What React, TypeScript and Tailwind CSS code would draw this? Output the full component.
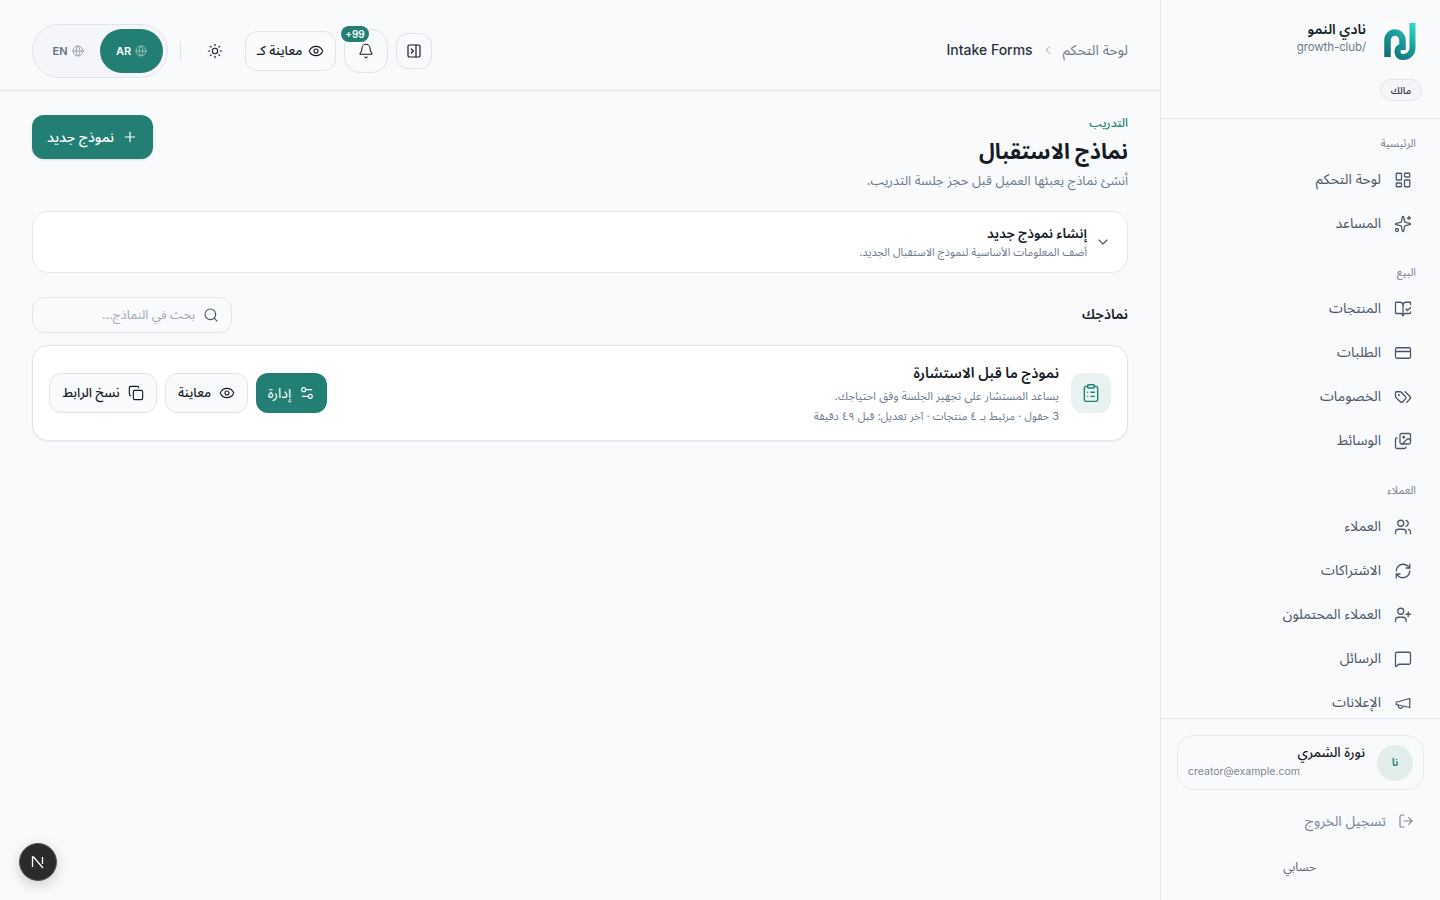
import React from "react";
import { LayoutDashboard, Sparkles, BookOpenCheck, CreditCard, Images, Users, RefreshCw, UserPlus, MessageSquare, LogOut, PanelRightClose, Bell, Eye, Sun, Globe, Plus, ChevronDown, ChevronRight, Search, Settings2, Copy, ClipboardList } from "lucide-react";

const font = "font-['Inter','Noto_Sans_Arabic','IBM_Plex_Sans_Arabic','Noto_Sans','DejaVu_Sans',sans-serif]";

function Megaphone({ className, strokeWidth }: { className?: string; strokeWidth?: number }) {
  return (
    <svg className={className} viewBox="0 0 24 24" fill="none" stroke="currentColor" strokeWidth={strokeWidth} strokeLinecap="round" strokeLinejoin="round">
      <path d="m3 11 18-5v12L3 14v-3z" />
      <path d="M11.6 16.8a3 3 0 1 1-5.8-1.6" />
    </svg>
  );
}

function Tags({ className, strokeWidth }: { className?: string; strokeWidth?: number }) {
  return (
    <svg className={className} viewBox="0 0 24 24" fill="none" stroke="currentColor" strokeWidth={strokeWidth} strokeLinecap="round" strokeLinejoin="round">
      <path d="m15 5 6.3 6.3a2.4 2.4 0 0 1 0 3.4L17 19" />
      <path d="M9.586 5.586A2 2 0 0 0 8.172 5H3a1 1 0 0 0-1 1v5.172a2 2 0 0 0 .586 1.414L8.29 18.29a2.426 2.426 0 0 0 3.42 0l3.58-3.58a2.426 2.426 0 0 0 0-3.42z" />
      <circle cx="6.5" cy="9.5" r=".5" fill="currentColor" />
    </svg>
  );
}

function NavItem({ icon: Icon, label }: { icon: any; label: string }) {
  return (
    <div className="flex h-11 items-center gap-[13px] pr-[26px] pl-3 text-[14px] text-[#4b5768]">
      <Icon className="size-[18px] shrink-0" strokeWidth={1.7} />
      <span className="-mt-[3px]">{label}</span>
    </div>
  );
}

function Section({ title, children, className }: { title: string; children: React.ReactNode; className?: string }) {
  return (
    <div className={className}>
      <div className="h-[18px] pr-[24px] text-[11px] leading-[16px] text-[#7b8594]">{title}</div>
      <div className="mt-[5px] pr-[2px]">{children}</div>
    </div>
  );
}

function Logo() {
  return (
    <div className="flex size-[44px] shrink-0 items-center justify-center rounded-xl bg-[#fbfbfb]">
      <svg width="34" height="38" viewBox="0 0 34 38" fill="none">
        <defs>
          <linearGradient id="lg" x1="4" y1="36" x2="30" y2="2" gradientUnits="userSpaceOnUse">
            <stop stopColor="#0c6a74" />
            <stop offset="0.55" stopColor="#1a9a98" />
            <stop offset="1" stopColor="#2ad8c8" />
          </linearGradient>
        </defs>
        <path d="M4.5 34V17a7.5 7.5 0 0 1 15 0v10" stroke="url(#lg)" strokeWidth="6.5" strokeLinecap="butt" />
        <path d="M29.5 0v25a9 9 0 0 1-9 9h-1a5 5 0 0 1-5-5v-1a4 4 0 0 1 4-4h1" stroke="url(#lg)" strokeWidth="6" strokeLinecap="butt" />
      </svg>
    </div>
  );
}

export default function App() {
  return (
    <div dir="rtl" className={`relative flex h-screen w-full overflow-hidden bg-[#f9fafc] text-[#161c27] ${font}`}>
      <aside className="flex h-full w-[280px] shrink-0 flex-col border-l border-[#e4e7ee]">
        <div className="h-[119px] shrink-0 border-b border-[#e4e7ee] pr-[18px] pt-[20px]">
          <div className="flex items-start gap-[12px]">
            <Logo />
            <div className="-mt-[1px]">
              <div className="text-[14px] font-semibold leading-[20px] text-[#161c27]">نادي النمو</div>
              <div dir="ltr" className="mt-[1px] text-right text-[11.5px] leading-[15px] tracking-[-0.1px] text-[#6f7a8a]">growth-club/</div>
            </div>
          </div>
          <div className="mt-[15px] flex">
            <span className="flex h-[22px] w-[42px] items-center justify-center rounded-full border border-[#e3e6ed] bg-[#f4f5f8] text-[10px] font-medium text-[#2b3342]">مالك</span>
          </div>
        </div>
        <nav className="min-h-0 flex-1 overflow-hidden pt-[16px]">
          <Section title="الرئيسية">
            <NavItem icon={LayoutDashboard} label="لوحة التحكم" />
            <NavItem icon={Sparkles} label="المساعد" />
          </Section>
          <Section title="البيع" className="mt-[18px]">
            <NavItem icon={BookOpenCheck} label="المنتجات" />
            <NavItem icon={CreditCard} label="الطلبات" />
            <NavItem icon={Tags} label="الخصومات" />
            <NavItem icon={Images} label="الوسائط" />
          </Section>
          <Section title="العملاء" className="mt-[19px]">
            <NavItem icon={Users} label="العملاء" />
            <NavItem icon={RefreshCw} label="الاشتراكات" />
            <NavItem icon={UserPlus} label="العملاء المحتملون" />
            <NavItem icon={MessageSquare} label="الرسائل" />
            <NavItem icon={Megaphone} label="الإعلانات" />
          </Section>
        </nav>
        <div className="h-[182px] shrink-0 border-t border-[#e4e7ee] pt-[16px]">
          <div className="mr-[16px] flex h-[55px] w-[247px] items-center gap-[12px] rounded-2xl border border-[#e7e9ef] pr-[10px] pl-[10px]">
            <div className="flex size-[36px] shrink-0 items-center justify-center rounded-full bg-[#e2eeeb] text-[11px] font-semibold text-[#237f73]">نا</div>
            <div className="min-w-0 flex-1">
              <div className="text-[13.5px] font-medium leading-[14px]">نورة الشمري</div>
              <div dir="ltr" className="mt-[5px] text-left text-[10.5px] leading-[16px] text-[#7b8594]">creator@example.com</div>
            </div>
          </div>
          <div className="mt-[16px] flex h-[29px] items-center gap-[12px] pr-[26px] text-[14px] text-[#7b8594]">
            <LogOut className="size-[16px]" strokeWidth={1.7} />
            <span>تسجيل الخروج</span>
          </div>
          <div className="mt-[22px] pr-[124px] text-[12px] leading-[20px] text-[#5d6777]">حسابي</div>
        </div>
      </aside>

      <main className="flex min-w-0 flex-1 flex-col">
        <header className="flex h-[91px] shrink-0 items-center justify-between border-b border-[#e0e4ec] px-[32px] pt-[12px]">
          <div className="-mt-[3px] flex items-center gap-[8px] text-[14px]">
            <span className="text-[#6f7a8a]">لوحة التحكم</span>
            <ChevronRight className="size-[14px] rotate-180 text-[#9aa3b1]" strokeWidth={1.7} />
            <span className="font-medium text-[#2b3342]">Intake Forms</span>
          </div>
          <div className="flex items-center gap-[8px]">
            <div className="flex size-[36px] items-center justify-center rounded-xl border border-[#dfe3ec]"><PanelRightClose className="size-[16px]" strokeWidth={1.8} /></div>
            <div className="relative flex h-[44px] w-[44px] items-center justify-center rounded-2xl border border-[#dfe3ec]">
              <Bell className="size-[16px]" strokeWidth={1.6} />
              <span dir="ltr" className="absolute -top-[4px] left-[-4px] flex h-[16px] w-[28px] items-center justify-center rounded-full bg-[#237f73] text-[10px] font-semibold text-white">+99</span>
            </div>
            <div className="flex h-[40px] w-[91px] items-center justify-center gap-[6px] rounded-xl border border-[#dfe3ec] text-[13px] font-medium">
              <Eye className="size-[16px]" strokeWidth={1.7} />
              <span>معاينة كـ</span>
            </div>
            <div className="mr-[2px] flex size-[40px] items-center justify-center"><Sun className="size-[16px]" strokeWidth={1.6} /></div>
            <div className="mr-[6px] h-[20px] w-px bg-[#dfe3ec]" />
            <div className="mr-[4px] flex h-[54px] w-[136px] items-center gap-[8px] rounded-full border border-[#e0e4ec] bg-[#f5f6f9] px-[4px]">
              <div dir="ltr" className="flex h-[44px] w-[63px] items-center justify-center gap-[4px] rounded-full bg-[#237f73] text-[11px] font-semibold text-white">AR <Globe className="size-[12px] opacity-50" /></div>
              <div dir="ltr" className="flex h-[44px] w-[48px] items-center justify-center gap-[4px] text-[11px] font-semibold text-[#667085]">EN <Globe className="size-[12px] text-[#9aa3b1]" /></div>
            </div>
          </div>
        </header>

        <div className="px-[32px] pt-[24px]">
          <div className="flex items-start justify-between">
            <div>
              <div className="text-[12px] font-medium leading-[16px] text-[#237f73]">التدريب</div>
              <h1 className="mt-[2px] text-[21.5px] font-bold leading-[36px] text-[#161c27]">نماذج الاستقبال</h1>
              <p className="mt-[1px] text-[13px] leading-[20px] text-[#6f7a8a]">أنشئ نماذج يعبئها العميل قبل حجز جلسة التدريب.</p>
            </div>
            <button className="flex h-[44px] w-[121px] items-center justify-center gap-[8px] rounded-xl bg-[#237f73] text-[14px] font-medium text-white shadow-sm">
              <Plus className="size-[16px]" strokeWidth={1.8} />
              <span className="-mt-[2px]">نموذج جديد</span>
            </button>
          </div>

          <div className="mt-[21px] flex h-[62px] items-center gap-[8px] rounded-2xl border border-[#e4e7ee] bg-white px-[16px]">
            <ChevronDown className="size-[16px] text-[#4b5768]" strokeWidth={1.7} />
            <div>
              <div className="text-[13.5px] font-semibold leading-[17px]">إنشاء نموذج جديد</div>
              <div className="mt-[2px] text-[11px] leading-[16px] text-[#6f7a8a]">أضف المعلومات الأساسية لنموذج الاستقبال الجديد.</div>
            </div>
          </div>

          <div className="mt-[24px] flex h-[36px] items-center justify-between">
            <h2 className="-mt-[4px] text-[14px] font-semibold">نماذجك</h2>
            <div className="flex h-[36px] w-[200px] items-center gap-[8px] rounded-xl border border-[#e0e4ec] px-[12px]">
              <Search className="size-[16px] text-[#4b5768]" strokeWidth={1.7} />
              <span className="text-[12.5px] text-[#a0a8b5]">بحث في النماذج...</span>
            </div>
          </div>

          <div className="mt-[12px] flex h-[96px] items-center justify-between rounded-2xl border border-[#dfe3ec] bg-white px-[16px] shadow-[0_1px_2px_rgba(16,24,40,0.05)]">
            <div className="flex items-center gap-[12px]">
              <div className="flex size-[40px] items-center justify-center rounded-xl bg-[#e8f2f0] text-[#237f73]"><ClipboardList className="size-[20px]" strokeWidth={1.7} /></div>
              <div>
                <div className="text-[14.5px] font-semibold leading-[24px]">نموذج ما قبل الاستشارة</div>
                <div className="mt-[2px] text-[11.3px] leading-[18px] text-[#6f7a8a]">يساعد المستشار على تجهيز الجلسة وفق احتياجك.</div>
                <div className="mt-[2px] text-[11px] leading-[18px] text-[#6f7a8a]">3 حقول · مرتبط بـ ٤ منتجات · آخر تعديل: قبل ٤٩ دقيقة</div>
              </div>
            </div>
            <div className="flex items-center gap-[8px]">
              <div className="flex h-[40px] w-[71px] items-center justify-center gap-[8px] rounded-xl bg-[#237f73] text-[14px] text-white"><Settings2 className="size-[16px]" strokeWidth={1.7} /><span className="-mt-[2px]">إدارة</span></div>
              <div className="flex h-[40px] w-[83px] items-center justify-center gap-[8px] rounded-xl border border-[#dfe3ec] bg-[#f9fafc] text-[13px] font-medium"><Eye className="size-[16px]" strokeWidth={1.7} /><span>معاينة</span></div>
              <div className="flex h-[40px] w-[108px] items-center justify-center gap-[8px] rounded-xl border border-[#dfe3ec] bg-[#f9fafc] text-[13px] font-medium"><Copy className="size-[16px]" strokeWidth={1.7} /><span>نسخ الرابط</span></div>
            </div>
          </div>
        </div>
      </main>

      <div dir="ltr" className="absolute bottom-[19px] left-[19px] flex size-[38px] items-center justify-center rounded-full border border-[#555] bg-[#2b2b2b] text-[15px] text-white shadow-[0_4px_14px_rgba(0,0,0,0.18)]">
        <svg width="16" height="16" viewBox="0 0 16 16" fill="none"><path d="M2.5 13V3h1L13 14M12.5 3v7" stroke="white" strokeWidth="1.3" /></svg>
      </div>
    </div>
  );
}
